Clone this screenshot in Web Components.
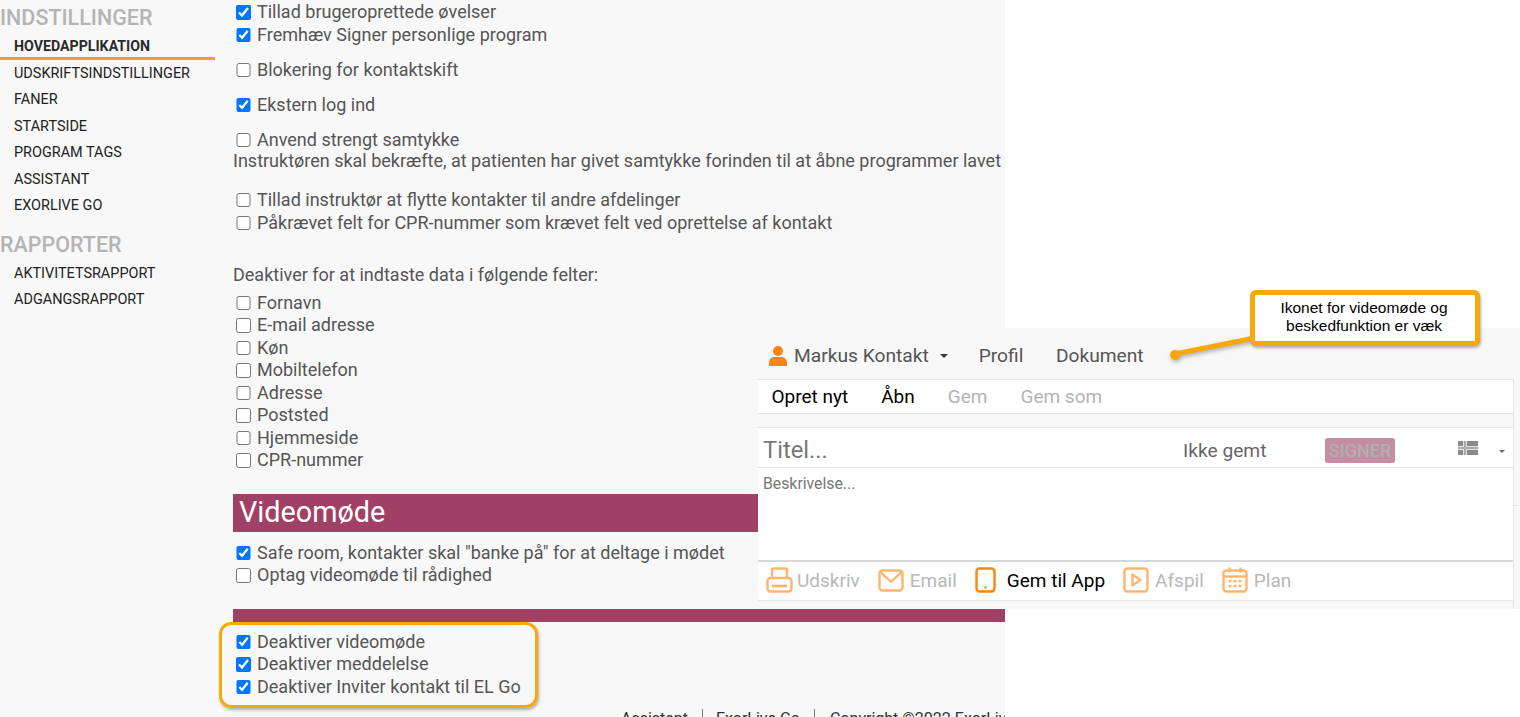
<!DOCTYPE html>
<html lang="da">
<head>
<meta charset="utf-8">
<title>Indstillinger</title>
<style>
  html, body { margin: 0; height: 717px; overflow: hidden; background: #fff; }
  body { font-family: Roboto, "Liberation Sans", sans-serif; position: relative; }
</style>
</head>
<body>
<settings-page>
  <side-nav slot="side">
    <nav-group title="INDSTILLINGER">
      <nav-item active>Hovedapplikation</nav-item>
      <nav-item>Udskriftsindstillinger</nav-item>
      <nav-item>Faner</nav-item>
      <nav-item>Startside</nav-item>
      <nav-item>Program tags</nav-item>
      <nav-item>Assistant</nav-item>
      <nav-item>ExorLive GO</nav-item>
    </nav-group>
    <nav-group title="RAPPORTER">
      <nav-item>Aktivitetsrapport</nav-item>
      <nav-item>Adgangsrapport</nav-item>
    </nav-group>
  </side-nav>

  <check-row checked>Tillad brugeroprettede øvelser</check-row>
  <check-row checked>Fremhæv Signer personlige program</check-row>
  <check-row gap="12.5">Blokering for kontaktskift</check-row>
  <check-row gap="12.5" checked>Ekstern log ind</check-row>
  <check-row gap="12.5">Anvend strengt samtykke</check-row>
  <plain-line>Instruktøren skal bekræfte, at patienten har givet samtykke forinden til at åbne programmer lavet</plain-line>
  <check-row gap="17.5">Tillad instruktør at flytte kontakter til andre afdelinger</check-row>
  <check-row gap="0.5">Påkrævet felt for CPR-nummer som krævet felt ved oprettelse af kontakt</check-row>
  <plain-line gap="30.5">Deaktiver for at indtaste data i følgende felter:</plain-line>
  <check-row gap="7.25">Fornavn</check-row>
  <check-row>E-mail adresse</check-row>
  <check-row>Køn</check-row>
  <check-row>Mobiltelefon</check-row>
  <check-row>Adresse</check-row>
  <check-row>Poststed</check-row>
  <check-row>Hjemmeside</check-row>
  <check-row>CPR-nummer</check-row>
  <section-banner>Videomøde</section-banner>
  <check-row gap="10" checked>Safe room, kontakter skal "banke på" for at deltage i mødet</check-row>
  <check-row>Optag videomøde til rådighed</check-row>
  <section-banner thin></section-banner>
  <check-row gap="9" checked>Deaktiver videomøde</check-row>
  <check-row checked>Deaktiver meddelelse</check-row>
  <check-row checked>Deaktiver Inviter kontakt til EL Go</check-row>
  <page-footer></page-footer>
</settings-page>

<document-panel></document-panel>
<note-callout>Ikonet for videomøde og<br>beskedfunktion er væk</note-callout>
<focus-ring></focus-ring>

<script>
class SettingsPage extends HTMLElement {
  constructor() {
    super();
    this.attachShadow({ mode: "open" }).innerHTML = `
      <style>
        :host { display: flex; width: 1005px; height: 717px; background: #f8f8f8; overflow: hidden; }
        .side { flex: 0 0 215px; }
        .main { flex: 1; min-width: 0; padding: 1px 0 0 18px; }
      </style>
      <div class="side"><slot name="side"></slot></div>
      <div class="main"><slot></slot></div>
    `;
  }
}

class SideNav extends HTMLElement {
  constructor() {
    super();
    this.attachShadow({ mode: "open" }).innerHTML = `
      <style>
        :host { display: block; padding-top: 5px; }
      </style>
      <slot></slot>
    `;
  }
}

class NavGroup extends HTMLElement {
  constructor() {
    super();
    const title = this.getAttribute("title");
    this.removeAttribute("title");
    this.attachShadow({ mode: "open" }).innerHTML = `
      <style>
        :host { display: block; margin-bottom: 12.25px; }
        h2 {
          margin: 0 0 3px;
          font: 500 21.5px/26px Roboto, sans-serif;
          color: #b4b4b4;
        }
      </style>
      <h2>${title}</h2>
      <slot></slot>
    `;
  }
}

class NavItem extends HTMLElement {
  constructor() {
    super();
    this.attachShadow({ mode: "open" }).innerHTML = `
      <style>
        :host {
          display: block;
          height: 26.5px;
          box-sizing: border-box;
          padding-left: 14px;
          font: 400 14.45px/26.5px Roboto, sans-serif;
          color: #222;
          text-transform: uppercase;
        }
        :host([active]) {
          font-weight: 700;
          font-size: 14.2px;
          line-height: 24px;
          color: #2a2a2a;
          border-bottom: 3px solid #ff9a2e;
          height: 26px;
          margin-bottom: 0.5px;
        }
      </style>
      <slot></slot>
    `;
  }
}

class CheckRow extends HTMLElement {
  constructor() {
    super();
    const gap = this.getAttribute("gap") || 0;
    const checked = this.hasAttribute("checked") ? "checked" : "";
    this.attachShadow({ mode: "open" }).innerHTML = `
      <style>
        :host {
          display: flex;
          align-items: center;
          height: 22.5px;
          margin-top: ${gap}px;
          font: 400 18px/22.5px Roboto, sans-serif;
          color: #555;
          white-space: nowrap;
        }
        input {
          width: 14.5px;
          height: 14.5px;
          margin: 0 6.5px 0 3px;
          accent-color: #0075ff;
        }
      </style>
      <input type="checkbox" ${checked}><span><slot></slot></span>
    `;
  }
}

class PlainLine extends HTMLElement {
  constructor() {
    super();
    const gap = this.getAttribute("gap") || 0;
    this.attachShadow({ mode: "open" }).innerHTML = `
      <style>
        :host {
          display: block;
          margin-top: ${gap}px;
          font: 400 18px/20px Roboto, sans-serif;
          color: #555;
          white-space: nowrap;
        }
      </style>
      <slot></slot>
    `;
  }
}

class SectionBanner extends HTMLElement {
  constructor() {
    super();
    this.attachShadow({ mode: "open" }).innerHTML = `
      <style>
        :host {
          display: block;
          margin-top: 22px;
          height: 38px;
          padding-left: 6px;
          background: #a04064;
          color: #fff;
          font: 400 28.8px/36px Roboto, sans-serif;
        }
        :host([thin]) { height: 13px; }
      </style>
      <slot></slot>
    `;
  }
}

class PageFooter extends HTMLElement {
  constructor() {
    super();
    this.attachShadow({ mode: "open" }).innerHTML = `
      <style>
        :host {
          display: flex;
          margin: 11px 0 0 388px;
          font: 400 16px/20px Roboto, sans-serif;
          color: #333;
          white-space: nowrap;
        }
        span { padding: 0 14px 0 13px; border-left: 1px solid #777; }
        span:first-of-type { padding-left: 0; border-left: 0; }
        span:last-of-type { padding-left: 15px; }
      </style>
      <span>Assistent</span><span>ExorLive Go</span><span>Copyright ©2022 ExorLive</span>
    `;
  }
}

class PanelMenu extends HTMLElement {
  constructor() {
    super();
    this.attachShadow({ mode: "open" }).innerHTML = `
      <style>
        :host { display: inline-block; white-space: nowrap; color: #000; }
        :host([off]) { color: #b3b3b3; }
      </style>
      <slot></slot>
    `;
  }
}

class ActionButton extends HTMLElement {
  constructor() {
    super();
    this.attachShadow({ mode: "open" }).innerHTML = `
      <style>
        :host {
          display: inline-flex;
          align-items: center;
          gap: 6px;
          color: #b8b8b8;
          white-space: nowrap;
        }
        :host([on]) { color: #000; gap: 11px; }
        ::slotted(svg) { display: block; opacity: .6; }
        :host([on]) ::slotted(svg) { opacity: 1; }
      </style>
      <slot name="icon"></slot><slot></slot>
    `;
  }
}

class DocumentPanel extends HTMLElement {
  constructor() {
    super();
    this.attachShadow({ mode: "open" }).innerHTML = `
      <style>
        :host {
          position: absolute;
          left: 758px;
          top: 328px;
          width: 762px;
          height: 281px;
          display: flex;
          background: #f8f8f8;
          font-family: Roboto, sans-serif;
        }
        .col { flex: 0 0 755px; display: flex; flex-direction: column; }
        .rail { flex: 1; border-left: 1px solid #e6e6e6; margin-top: 51px; }
        .rail i { display: block; height: 126px; border-bottom: 1px solid #e6e6e6; }
        .top {
          height: 51px;
          box-sizing: border-box;
          padding: 3px 0 0 10px;
          display: flex;
          align-items: center;
          gap: 32.5px;
          font-size: 19.2px;
          color: #555;
        }
        .who { display: flex; align-items: center; gap: 6px; margin-right: -1.5px; }
        .caret {
          width: 0; height: 0; margin-left: 5px; margin-top: 2px;
          border: 4px solid transparent;
          border-top-color: #333;
          border-bottom: 0;
        }
        .menu {
          height: 35px;
          box-sizing: border-box;
          background: #fff;
          border-top: 1px solid #e4e4e4;
          border-bottom: 1px solid #e4e4e4;
          padding-left: 13.5px;
          display: flex;
          align-items: center;
          gap: 33px;
          font-size: 19px;
        }
        .spacer { height: 13px; }
        .title {
          height: 41px;
          box-sizing: border-box;
          background: #fff;
          border-top: 1px solid #e4e4e4;
          border-bottom: 1px solid #e4e4e4;
          padding: 4px 0 0 5px;
          display: flex;
          align-items: center;
          font-size: 19.2px;
          color: #666;
        }
        .title b { flex: 0 0 420px; font: 400 23.7px Roboto, sans-serif; color: #777; }
        .title span { flex: 0 0 142px; margin-top: 2px; }
        .signer {
          flex: 0 0 70px;
          height: 25px;
          box-sizing: border-box;
          margin-top: 2px;
          text-align: center;
          font: 500 18px/25px Roboto, sans-serif;
          color: #b0b0b0;
          background: #c58ca2;
          border-radius: 3px;
        }
        .flag { margin-left: 63px; display: block; margin-top: -4px; }
        .caret2 {
          margin-left: 21px; margin-top: 3px; width: 0; height: 0;
          border: 3.5px solid transparent; border-top-color: #666; border-bottom: 0;
        }
        .desc {
          height: 92px;
          box-sizing: border-box;
          background: #fff;
          padding: 7px 5px;
          font-size: 15.8px;
          line-height: 18px;
          color: #777;
        }
        .acts {
          height: 41px;
          box-sizing: border-box;
          background: #fff;
          border-top: 2px solid #d8d8d8;
          border-bottom: 1px solid #e8e8e8;
          padding: 0 0 2px 8px;
          display: flex;
          align-items: center;
          gap: 18px;
          font-size: 19px;
        }
        .acts svg.print { margin-right: -2px; }
      </style>
      <div class="col">
        <div class="top">
          <span class="who">
            <svg width="20" height="21" viewBox="0 0 20 21"><circle cx="10" cy="6" r="5" fill="#ff8412"/><path d="M1 21v-3.5C1 14 4 12 7 12h6c3 0 6 2 6 5.500V21z" fill="#ff8412"/></svg>
            Markus Kontakt<i class="caret"></i>
          </span>
          <span>Profil</span>
          <span>Dokument</span>
        </div>
        <div class="menu">
          <panel-menu>Opret nyt</panel-menu>
          <panel-menu>Åbn</panel-menu>
          <panel-menu off>Gem</panel-menu>
          <panel-menu off>Gem som</panel-menu>
        </div>
        <div class="spacer"></div>
        <div class="title">
          <b>Titel...</b>
          <span>Ikke gemt</span>
          <div class="signer">SIGNER</div>
          <svg class="flag" width="20" height="14" viewBox="0 0 20 14">
            <rect width="20" height="14" fill="#8a8a8a"/>
            <rect x="5" width="4" height="14" fill="#e2e2e2"/>
            <rect y="5" width="20" height="4" fill="#e2e2e2"/>
            <rect x="6" width="2" height="14" fill="#aaa"/>
            <rect y="6" width="20" height="2" fill="#aaa"/>
          </svg>
          <i class="caret2"></i>
        </div>
        <div class="desc">Beskrivelse...</div>
        <div class="acts">
          <action-button>
            <svg class="print" slot="icon" width="27" height="26" viewBox="0 0 27 26" fill="none" stroke="#ff8412" stroke-width="2.4" stroke-linejoin="round"><path d="M6 11V3a1.500 1.500 0 0 1 1.500-1.500h12A1.500 1.500 0 0 1 21 3v8"/><rect x="1.500" y="11" width="24" height="13.500" rx="3"/><path d="M6 19h15" stroke-width="2.800"/></svg>
            Udskriv
          </action-button>
          <action-button>
            <svg slot="icon" width="26" height="23" viewBox="0 0 26 23" fill="none" stroke="#ff8412" stroke-width="2.400" stroke-linejoin="round"><rect x="1.500" y="1.500" width="23" height="20" rx="3"/><path d="M2.500 3l10.500 10L23.500 3"/></svg>
            Email
          </action-button>
          <action-button on>
            <svg slot="icon" width="21" height="26" viewBox="0 0 21 26" fill="none" stroke="#ff8412" stroke-width="2.400"><rect x="1.500" y="1.500" width="18" height="23" rx="3"/><circle cx="10.500" cy="20.500" r="1.200" fill="#ff8412" stroke="none"/></svg>
            Gem til App
          </action-button>
          <action-button>
            <svg slot="icon" width="26" height="26" viewBox="0 0 26 26" fill="none" stroke="#ff8412" stroke-width="2.400" stroke-linejoin="round"><rect x="1.500" y="1.500" width="23" height="23" rx="3"/><path d="M9.500 7.500l8 5.500-8 5.500z"/></svg>
            Afspil
          </action-button>
          <action-button>
            <svg slot="icon" width="26" height="26" viewBox="0 0 26 26" fill="none" stroke="#ff8412" stroke-width="2.400"><rect x="1.500" y="3.500" width="23" height="21" rx="3"/><path d="M7.500 0.500v5M18.500 0.500v5M2 9.500h22"/><path d="M6.500 14h3M11.500 14h3M16.500 14h3M6.500 19h3M11.500 19h3M16.500 19h3" stroke-width="2.600"/></svg>
            Plan
          </action-button>
        </div>
      </div>
      <div class="rail"><i></i></div>
    `;
  }
}

class NoteCallout extends HTMLElement {
  constructor() {
    super();
    this.attachShadow({ mode: "open" }).innerHTML = `
      <style>
        :host {
          position: absolute;
          left: 1165px;
          top: 290px;
          width: 315px;
          height: 76px;
          font: 400 15.5px/18px "Liberation Sans", Arial, sans-serif;
          color: #000;
        }
        svg { position: absolute; left: 0; top: 0; filter: drop-shadow(1px 2px 2px rgba(0,0,0,.3)); }
        .box {
          position: absolute;
          left: 85px;
          top: 0;
          width: 230px;
          height: 56px;
          box-sizing: border-box;
          padding: 4px 2px 0 0;
          background: #fff;
          border: 5px solid #f9a80a;
          border-radius: 6px;
          box-shadow: 1px 2px 3px rgba(0,0,0,.3);
          text-align: center;
        }
      </style>
      <svg width="92" height="76" viewBox="0 0 92 76">
        <path d="M90 48L10 64" stroke="#f9a80a" stroke-width="5" fill="none"/>
        <circle cx="10" cy="65" r="5" fill="#f9a80a"/>
      </svg>
      <div class="box"><slot></slot></div>
    `;
  }
}

class FocusRing extends HTMLElement {
  constructor() {
    super();
    this.attachShadow({ mode: "open" }).innerHTML = `
      <style>
        :host {
          position: absolute;
          left: 219px;
          top: 622px;
          width: 319px;
          height: 86px;
          box-sizing: border-box;
          border: 3px solid #f9a80a;
          border-radius: 12px;
          box-shadow: 1px 2px 3px rgba(0,0,0,.3);
        }
      </style>
    `;
  }
}

customElements.define("settings-page", SettingsPage);
customElements.define("side-nav", SideNav);
customElements.define("nav-group", NavGroup);
customElements.define("nav-item", NavItem);
customElements.define("check-row", CheckRow);
customElements.define("plain-line", PlainLine);
customElements.define("section-banner", SectionBanner);
customElements.define("page-footer", PageFooter);
customElements.define("panel-menu", PanelMenu);
customElements.define("action-button", ActionButton);
customElements.define("document-panel", DocumentPanel);
customElements.define("note-callout", NoteCallout);
customElements.define("focus-ring", FocusRing);
</script>
</body>
</html>
